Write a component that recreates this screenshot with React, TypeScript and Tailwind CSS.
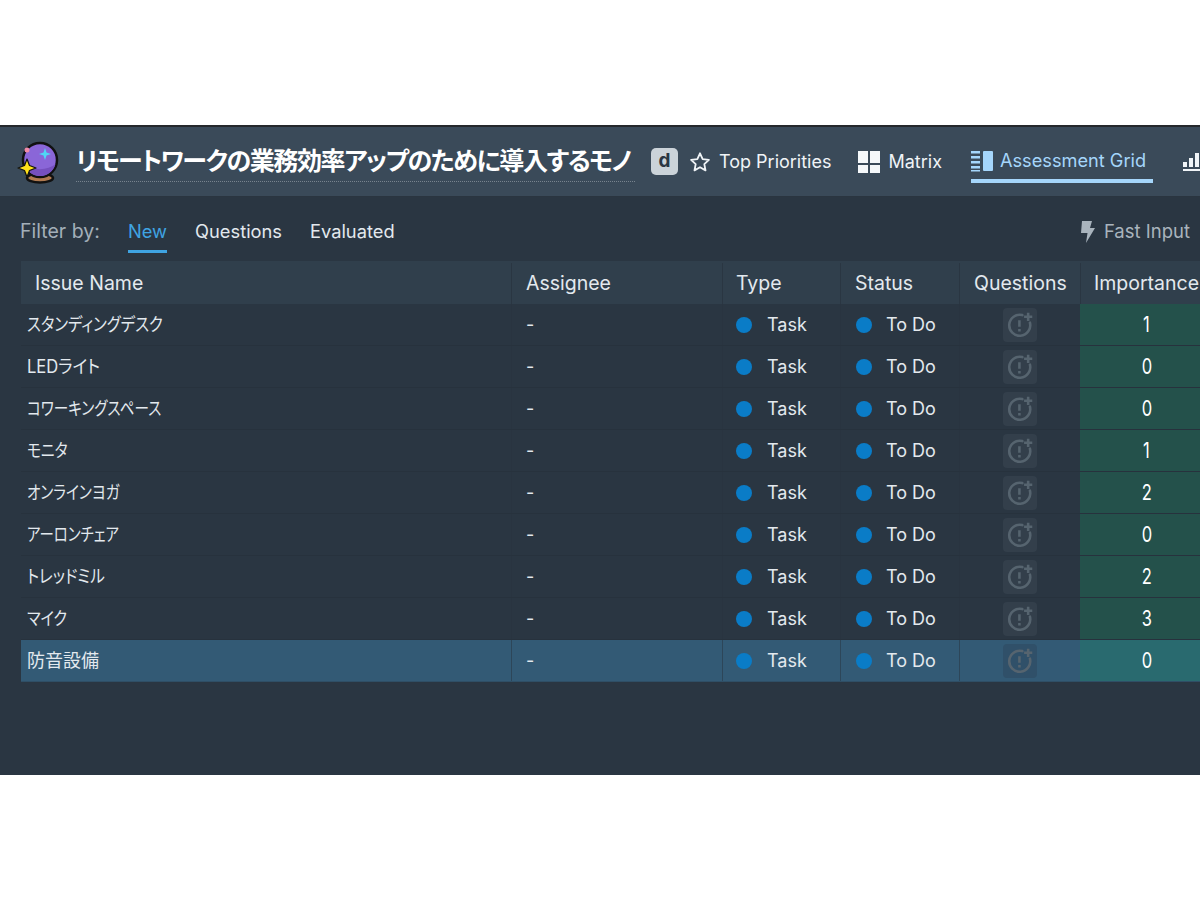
const issues = [
  { name: 'スタンディングデスク', importance: 1, squeeze: 'scale-x-[0.855]' },
  { name: 'LEDライト', importance: 0, squeeze: 'scale-x-[0.92]' },
  { name: 'コワーキングスペース', importance: 0, squeeze: 'scale-x-[0.81]' },
  { name: 'モニタ', importance: 1, squeeze: 'scale-x-[0.82]' },
  { name: 'オンラインヨガ', importance: 2, squeeze: 'scale-x-[0.81]' },
  { name: 'アーロンチェア', importance: 0, squeeze: 'scale-x-[0.8]' },
  { name: 'トレッドミル', importance: 2, squeeze: 'scale-x-[0.865]' },
  { name: 'マイク', importance: 3, squeeze: 'scale-x-[0.84]' },
  { name: '防音設備', importance: 0, squeeze: 'scale-x-100', selected: true },
]

const gridCols = 'grid grid-cols-[490px_211px_118px_119px_121px_133px]'

function CrystalBall() {
  return (
    <svg width="42" height="44" viewBox="0 0 42 44" className="shrink-0">
      <ellipse cx="23" cy="38" rx="13" ry="4.500" fill="#b07a50" stroke="#111" strokeWidth="2.500" />
      <circle cx="23" cy="20" r="17" fill="#8a66d8" stroke="#111" strokeWidth="2.500" />
      <path d="M7.500 24a16 16 0 0 0 31 0a20 14 0 0 1-31 0z" fill="#7650bf" />
      <path d="M28 8l1.500 4.500L34 14l-4.500 1.500L28 20l-1.500-4.500L22 14l4.500-1.500z" fill="#4fd6f5" />
      <path d="M10 19l2.500 6.500L19 28l-6.500 2.500L10 37l-2.500-6.500L1 28l6.500-2.500z" fill="#ffe11a" stroke="#111" strokeWidth="1.200" strokeLinejoin="round" />
      <circle cx="10" cy="10" r="2.500" fill="#f08aa8" />
    </svg>
  )
}

function QuestionIcon() {
  return (
    <svg width="28" height="28" viewBox="0 0 24 24" fill="none" stroke="#56646f" strokeWidth="2.200">
      <path d="M14 3.500A9 9 0 1 0 20.500 10" strokeLinecap="round" />
      <path d="M11.500 8v5.500M11.500 15.500v2" />
      <path d="M19 1.500v7M15.500 5h7" />
    </svg>
  )
}

export default function App() {
  return (
    <div className="w-[1200px] h-[900px] bg-white overflow-hidden font-['Inter','Noto_Sans_CJK_JP',sans-serif] pt-[125px]">
      <div className="h-[650px] bg-[#2a3642] flex flex-col">
        <header className="h-[72px] shrink-0 border-t-2 border-[#25282c] border-b border-b-[#2a3540] bg-[#3a4a59] flex items-center pl-[17px] whitespace-nowrap text-[#f0f4f7] [&>*]:shrink-0">
          <CrystalBall />
          <div className="ml-[17px] w-[559px] h-[40px] border-b border-dotted border-[#77838e] text-[25px] font-semibold leading-[38px] tracking-[-1.4px] text-white [font-feature-settings:'palt']">
            リモートワークの業務効率アップのために導入するモノ
          </div>
          <div className="ml-[16px] w-[27px] h-[27px] rounded-[5px] bg-[#cbd3d9] text-[#2b3743] text-[19px] font-bold flex items-center justify-center">d</div>
          <svg width="22" height="22" viewBox="0 0 24 24" fill="none" stroke="#f0f4f7" strokeWidth="2" className="ml-[11px]">
            <path d="M12 2.500l2.900 6.300 6.800.8-5 4.700 1.300 6.800-6-3.400-6 3.400 1.300-6.800-5-4.700 6.800-.8z" strokeLinejoin="round" />
          </svg>
          <span className="ml-[8px] text-[18px]">Top Priorities</span>
          <svg width="22" height="22" viewBox="0 0 22 22" fill="#f5f8fa" className="ml-[27px]">
            <rect x="0" y="0" width="10" height="12" />
            <rect x="12" y="0" width="10" height="12" />
            <rect x="0" y="14" width="10" height="8" />
            <rect x="12" y="14" width="10" height="8" />
          </svg>
          <span className="ml-[8px] text-[18px]">Matrix</span>
          <div className="ml-[29px] h-[41px] pt-[2px] flex items-center gap-[7px] border-b-[4px] border-[#a5d6fb] pr-[7px] text-[#a5d6fb] mt-[1px]">
            <svg width="22" height="22" viewBox="0 0 22 22" fill="#a5d6fb">
              <rect x="0" y="1" width="9" height="2.500" />
              <rect x="0" y="6" width="9" height="2.500" />
              <rect x="0" y="11" width="9" height="2.500" />
              <rect x="0" y="16" width="9" height="2.500" />
              <rect x="0" y="20" width="9" height="1.500" />
              <rect x="12" y="1" width="10" height="20" rx="1" />
            </svg>
            <span className="text-[18.200px]">Assessment Grid</span>
          </div>
          <svg width="22" height="22" viewBox="0 0 22 22" fill="#f0f4f7" className="ml-[30px]">
            <rect x="0" y="11" width="4" height="5" />
            <rect x="6" y="7" width="4" height="9" />
            <rect x="12" y="2" width="4" height="14" />
            <rect x="18" y="9" width="4" height="7" />
            <rect x="0" y="18" width="22" height="2" />
          </svg>
        </header>

        <div className="h-[64px] shrink-0 flex items-center pl-[20px] pr-[10px] pt-[5px] text-[18.300px] text-[#e3e9ee]">
          <span className="text-[#a3afb9] w-[108px] text-[19.500px]">Filter by:</span>
          <span className="h-[38px] leading-[32px] border-b-[3px] border-[#3fa4e2] text-[#3fa4e2] mt-[4px]">New</span>
          <span className="ml-[28px]">Questions</span>
          <span className="ml-[28px]">Evaluated</span>
          <div className="ml-auto flex items-center gap-[9px] text-[#a9b4bd] text-[18.500px]">
            <svg width="15" height="22" viewBox="0 0 15 22" fill="#a9b4bd">
              <path d="M2 0h10l-2 7h5L6 22l1.500-10H1z" />
            </svg>
            <span>Fast Input</span>
          </div>
        </div>

        <div className="ml-[21px] text-[18px]">
          <div className={`${gridCols} h-[43px] pt-[2px] bg-[#303f4c] text-[#e3e9ee] items-stretch text-[19.500px]`}>
            <div className="pl-[14px] flex items-center">Issue Name</div>
            <div className="pl-[14px] flex items-center border-l border-[#2a3642]">Assignee</div>
            <div className="pl-[13px] flex items-center border-l border-[#2a3642]">Type</div>
            <div className="pl-[14px] flex items-center border-l border-[#2a3642]">Status</div>
            <div className="pl-[14px] flex items-center border-l border-[#2a3642]">Questions</div>
            <div className="pl-[13px] flex items-center border-l border-[#2a3642] whitespace-nowrap">Importance</div>
          </div>
          {issues.map((issue) => (
            <div
              key={issue.name}
              className={`${gridCols} h-[42px] border-b text-[#e3e9ee] ${
                issue.selected ? 'bg-[#335a75] border-[#2f4f66]' : 'border-[#27323d]'
              }`}
            >
              <div className="pl-[6px] flex items-center text-[18px] [font-feature-settings:'palt']">
                <span className={`inline-block origin-left whitespace-nowrap ${issue.squeeze}`}>{issue.name}</span>
              </div>
              <div className="pl-[14px] flex items-center border-l border-[#27323d]/50">-</div>
              <div className="pl-[13px] flex items-center gap-[15px] border-l border-[#27323d]/50">
                <span className="w-4 h-4 rounded-full bg-[#0a7cc7]" />
                Task
              </div>
              <div className="pl-[15px] flex items-center gap-[14px] border-l border-[#27323d]/50">
                <span className="w-4 h-4 rounded-full bg-[#0a7cc7]" />
                To Do
              </div>
              <div className="flex items-center justify-center border-l border-[#27323d]/50">
                <div className={`w-[34px] h-[34px] rounded-[4px] flex items-center justify-center ${issue.selected ? 'bg-[#305069]' : 'bg-[#333f4b]'}`}>
                  <QuestionIcon />
                </div>
              </div>
              <div className={`flex items-center justify-center text-white ${issue.selected ? 'bg-[#296a6f]' : 'bg-[#24514b]'}`}>
                <span className="inline-block text-[22px] scale-x-[0.75]">{issue.importance}</span>
              </div>
            </div>
          ))}
        </div>
      </div>
    </div>
  )
}
